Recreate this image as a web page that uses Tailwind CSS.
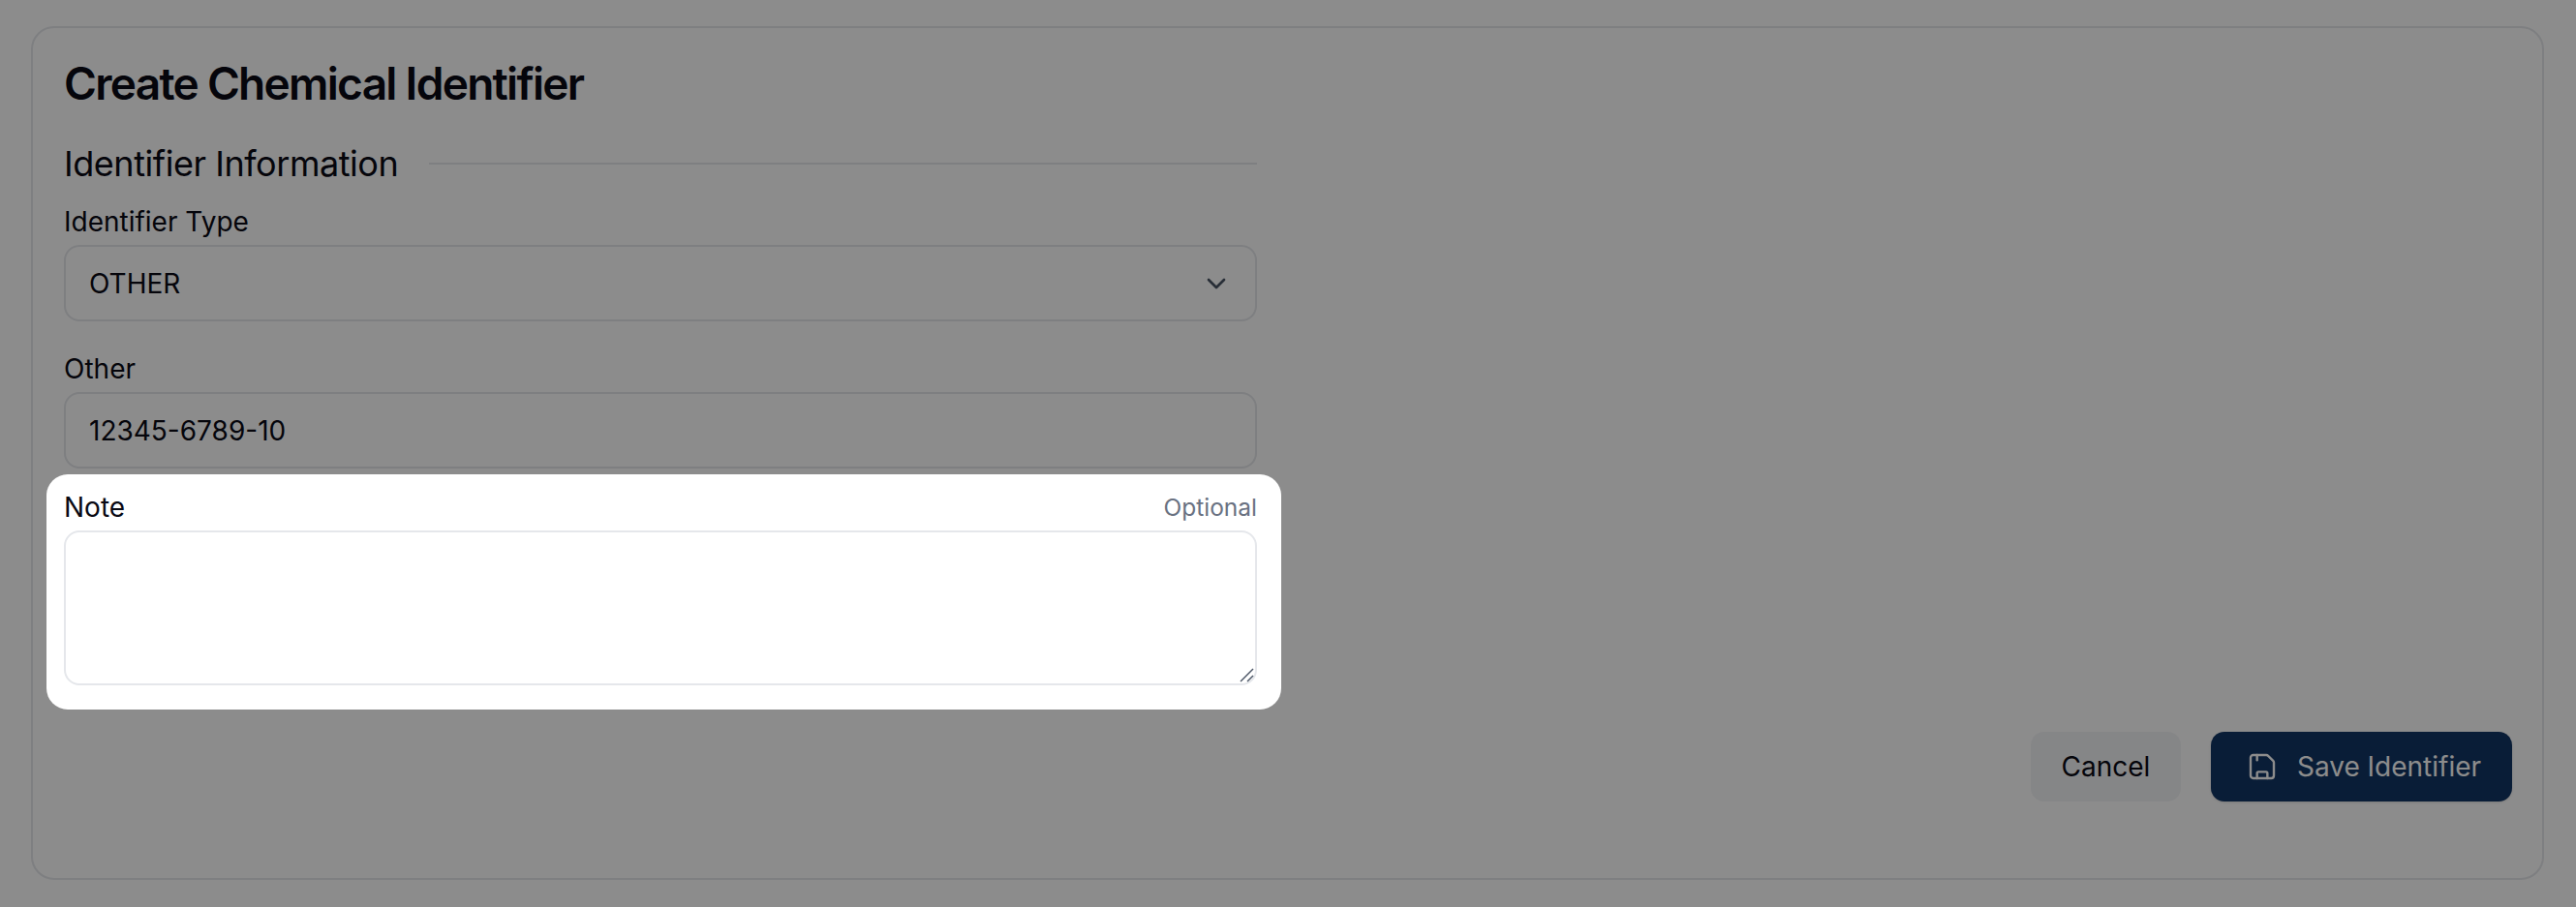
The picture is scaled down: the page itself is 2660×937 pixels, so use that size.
<!DOCTYPE html>
<html lang="en">
<head>
    <title>Create Chemical Identifier</title>
    <script src="https://cdn.jsdelivr.net/npm/@tailwindcss/browser@4"></script>
    <meta name="viewport" content="width=device-width, initial-scale=1.0">
</head>
<body class="bg-white font-['Inter',sans-serif] text-[#0a0a14] h-[937px] overflow-hidden relative">

<div class="pt-[27px] pr-[33px] pb-[28px] pl-[32px] h-full">
    <!-- Card -->
    <div class="h-full border-2 border-gray-200 rounded-[24px] pt-[29px] pr-[31px] pl-[32px] flex flex-col">
        <h1 class="text-[46px] leading-[56px] font-semibold tracking-[-1.7px]">Create Chemical Identifier</h1>

        <div class="w-[1232px] mt-[39px]">
            <!-- Section heading -->
            <div class="flex items-center gap-[32px] h-[32px]">
                <h2 class="text-[36px] leading-[32px] font-normal tracking-[-0.45px] whitespace-nowrap">Identifier Information</h2>
                <div class="flex-1 h-[2px] bg-gray-200"></div>
            </div>

            <label class="block text-[28px] leading-[40px] mt-[24px]">Identifier Type</label>
            <button class="mt-[4px] w-full h-[79px] border-2 border-gray-200 rounded-[16px] pl-[24px] pr-[24px] flex items-center justify-between text-[28px]">
                <span>OTHER</span>
                <svg class="w-[32px] h-[32px] text-gray-600" viewBox="0 0 24 24" fill="none" stroke="currentColor" stroke-width="2" stroke-linecap="round" stroke-linejoin="round"><path d="m6 9 6 6 6-6"/></svg>
            </button>

            <label class="block text-[28px] leading-[40px] mt-[29px]">Other</label>
            <input type="text" value="12345-6789-10" class="mt-[4px] block w-full h-[79px] border-2 border-gray-200 rounded-[16px] px-[24px] text-[28px]">

            <div class="flex items-center justify-between h-[40px] mt-[20px]">
                <label class="text-[28px] leading-[40px]">Note</label>
                <span class="text-[24.5px] text-gray-500">Optional</span>
            </div>
            <div class="relative mt-[4px]">
                <textarea class="block w-full h-[160px] border-2 border-gray-200 rounded-[16px] resize-none"></textarea>
                <!-- resize grip -->
                <svg class="absolute right-[3px] bottom-[3px] w-[15px] h-[15px] text-gray-600" viewBox="0 0 15 15" fill="none" stroke="currentColor" stroke-width="1.4"><path d="M1 14 14 1"/><path d="M8 14 14 8"/></svg>
            </div>
        </div>

        <!-- Actions -->
        <div class="flex justify-end gap-[31px] mt-[48px]">
            <button class="w-[155px] h-[72px] rounded-[14px] bg-gray-100 text-[28px] font-normal">Cancel</button>
            <button class="w-[311px] h-[72px] rounded-[14px] bg-[#123564] text-white text-[28px] font-normal flex items-center justify-center gap-[20px] pl-[5px] shadow-sm">
                <svg class="w-[32px] h-[32px]" viewBox="0 0 24 24" fill="none" stroke="currentColor" stroke-width="1.8" stroke-linecap="round" stroke-linejoin="round"><path d="M15.2 3a2 2 0 0 1 1.4.6l3.8 3.8a2 2 0 0 1 .6 1.4V19a2 2 0 0 1-2 2H5a2 2 0 0 1-2-2V5a2 2 0 0 1 2-2z"/><path d="M8 21v-4a1 1 0 0 1 1-1h6a1 1 0 0 1 1 1v4"/><path d="M8 3v4"/></svg>
                Save Identifier
            </button>
        </div>
    </div>
</div>

<!-- Tour spotlight: dims everything around the Note field -->
<div class="absolute left-[48px] top-[490px] w-[1275px] h-[243px] rounded-[22px] shadow-[0_0_0_3000px_rgba(0,0,0,0.45)] pointer-events-none"></div>

</body>
</html>
